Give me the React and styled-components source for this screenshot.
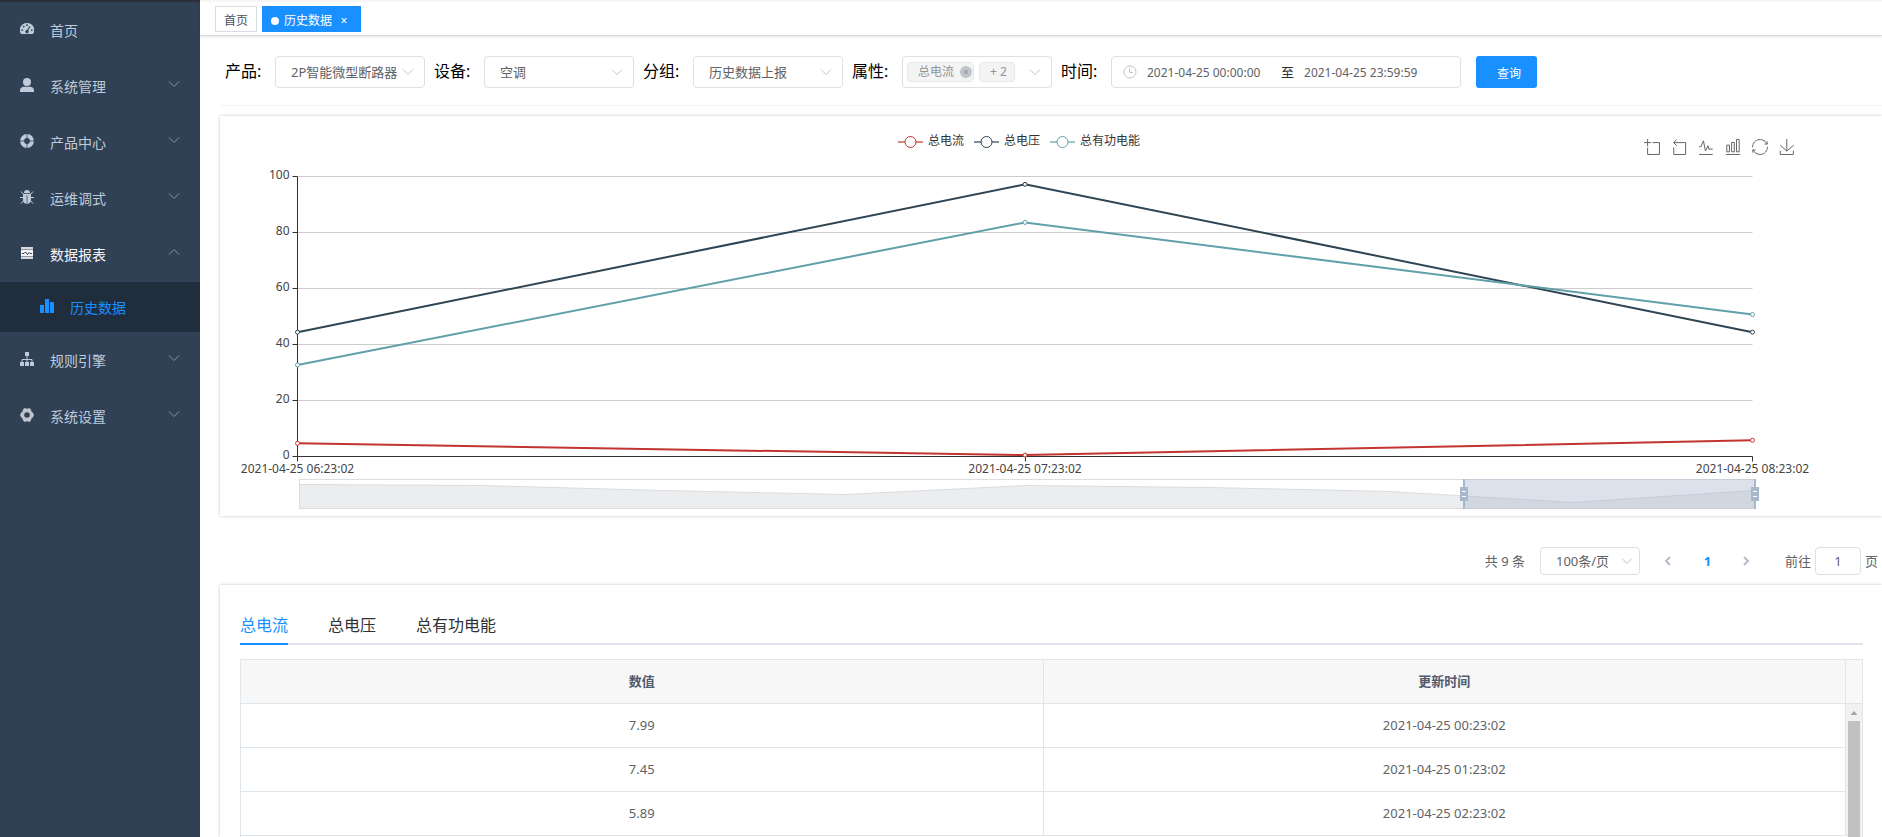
import React, { useLayoutEffect, useRef, useState } from "react";
import styled, { createGlobalStyle, css } from "styled-components";

const GlobalStyle = createGlobalStyle`
  *, *::before, *::after { box-sizing: border-box; }
  body { margin: 0; background: #fff; color: #303133; }
  body, button, input, select { font-family: "Noto Sans", "Noto Sans CJK SC", sans-serif; }
  button { border: 0; padding: 0; background: none; cursor: pointer; }
  a { color: inherit; text-decoration: none; }
`;

const Shell = styled.div`
  display: flex;
  height: 100vh;
  overflow: hidden;
`;

/* ---------- sidebar ---------- */

const Sidebar = styled.nav`
  flex: 0 0 200px;
  background: #304156;
  border-top: 2px solid #2b2f3a;
`;

const MenuRow = styled.a`
  display: flex;
  align-items: center;
  height: ${(p) => (p.$sub ? 50 : 56)}px;
  padding: 0 20px 0 ${(p) => (p.$sub ? 40 : 20)}px;
  gap: 16px;
  font-size: 14px;
  line-height: 20px;
  background: ${(p) => (p.$sub ? "#1f2d3d" : "transparent")};
  color: ${(p) => (p.$sub ? "#1890ff" : p.$open ? "#f4f4f5" : "#bfcbd9")};
`;

const MenuIcon = styled.svg`
  flex: none;
  width: 14px;
  height: 14px;
  margin-bottom: 2px;
`;

const MenuText = styled.span`
  flex: 1;
  padding-top: 2px;
`;

const ChevronSvg = styled.svg`
  flex: none;
  width: 12px;
  height: 12px;
  fill: none;
  stroke: ${(p) => p.$color || "#c0c4cc"};
  pointer-events: none;
  transform: ${(p) => (p.$up ? "rotate(180deg)" : "none")};
`;

const MenuChevron = styled(ChevronSvg)`
  margin-bottom: 4px;
`;

const icons = {
  gauge: (
    <path
      fill="currentColor"
      fillRule="evenodd"
      d="M7 1a7 7 0 0 0-6 10.900h12A7 7 0 0 0 7 1zM7 2.300a.9.9 0 1 1 0 1.800.9.9 0 0 1 0-1.800zM3.700 3.700a.9.9 0 1 1 0 1.800.9.9 0 0 1 0-1.800zM2.200 7.200a.9.9 0 1 1 0 1.800.9.9 0 0 1 0-1.800zM11.800 7.200a.9.9 0 1 1 0 1.800.9.9 0 0 1 0-1.800zM9.600 3.900l.9.500-2.300 4.200a1.600 1.600 0 1 1-1.100-.5z"
    />
  ),
  user: (
    <g fill="currentColor">
      <circle cx="7" cy="4" r="4" />
      <path d="M0 14v-1.500C0 9.800 2.500 8.800 4 8.800h6c1.500 0 4 1 4 3.700V14z" />
    </g>
  ),
  buoy: (
    <g fill="none">
      <circle cx="7" cy="7" r="4.900" stroke="currentColor" strokeWidth="4" />
      <path d="M7 0v4.500M7 9.500V14M0 7h4.500M9.500 7H14" stroke="#304156" opacity="0.8" />
    </g>
  ),
  bug: (
    <g>
      <path fill="currentColor" d="M4 3a3 3 0 0 1 6 0zM3 3.800h8V10c0 2-1.500 3.800-4 3.800S3 12 3 10z" />
      <path
        fill="none"
        stroke="currentColor"
        d="M1 1.500l2.500 3M13 1.500l-2.500 3M0 7.500h4M14 7.500h-4M1 13.500l3-3.500M13 13.500L10 10"
      />
      <path stroke="#304156" opacity="0.7" d="M7 5.500V13" />
    </g>
  ),
  report: (
    <g>
      <path fill="currentColor" d="M1 1h12v2H1zM1 11h12v2H1z" opacity="0.85" />
      <path fill="currentColor" d="M1 3.500h12v7H1z" />
      <path fill="none" stroke="#304156" d="M2 7.500h2l1.500-1.500 2 2.500L9 6.500l1 1h2" />
    </g>
  ),
  bars: <path fill="currentColor" d="M0 6h4v8H0zM5 0h4v14H5zM10 3h4v11h-4z" />,
  tree: (
    <g>
      <path fill="currentColor" d="M5 0h4v4H5zM0 10h4v4H0zM5 10h4v4H5zM10 10h4v4h-4z" />
      <path fill="none" stroke="currentColor" d="M7 4v6M2 10V7.500h10V10" />
    </g>
  ),
  gear: (
    <path
      fill="#c0c4cc"
      fillRule="evenodd"
      d="M4 0.300h1.800L7 1l1.200-.7H10l1.300 2.200.2 1.200 1.300.8L14 7l-1.200 2.500-1.300.8-.2 1.200L10 13.700H8.200L7 13l-1.200.7H4l-1.300-2.200-.2-1.200-1.300-.8L0 7l1.200-2.500 1.300-.8.2-1.200zM7 4.200a2.800 2.800 0 1 0 0 5.600 2.800 2.800 0 0 0 0-5.600z"
    />
  ),
};

const menu = [
  { label: "首页", icon: "gauge" },
  { label: "系统管理", icon: "user", arrow: true },
  { label: "产品中心", icon: "buoy", arrow: true },
  { label: "运维调式", icon: "bug", arrow: true },
  { label: "数据报表", icon: "report", arrow: true, open: true },
  { label: "历史数据", icon: "bars", sub: true },
  { label: "规则引擎", icon: "tree", arrow: true },
  { label: "系统设置", icon: "gear", arrow: true },
];

const Chevron = ({ as: Svg = ChevronSvg, ...rest }) => (
  <Svg viewBox="0 0 12 12" aria-hidden="true" {...rest}>
    <path d="M1 3.500l5 5 5-5" />
  </Svg>
);

/* ---------- page header tags ---------- */

const Main = styled.main`
  flex: 1;
  min-width: 0;
  display: flex;
  flex-direction: column;
`;

const TagBar = styled.div`
  flex: none;
  display: flex;
  gap: 5px;
  height: 36px;
  padding: 4px 15px 0;
  border-top: 2px solid #f5f7f7;
  border-bottom: 1px solid #d8dce5;
  box-shadow: 0 1px 3px rgba(0, 0, 0, 0.12);
`;

const PageTag = styled.div`
  display: flex;
  align-items: center;
  height: 26px;
  padding: 3px 8px 0;
  border: 1px solid ${(p) => (p.$active ? "#1890ff" : "#d8dce5")};
  background: ${(p) => (p.$active ? "#1890ff" : "#fff")};
  color: ${(p) => (p.$active ? "#fff" : "#495060")};
  font-size: 12px;
  line-height: 20px;
  &::before {
    content: "";
    display: ${(p) => (p.$active ? "block" : "none")};
    width: 8px;
    height: 8px;
    margin-right: 5px;
    border-radius: 50%;
    background: #fff;
  }
`;

const TagClose = styled.button`
  width: 16px;
  margin-left: 4px;
  color: #fff;
  font-size: 12px;
  line-height: 16px;
`;

/* ---------- filters ---------- */

const Filters = styled.form`
  flex: none;
  display: flex;
  align-items: center;
  gap: 9px;
  margin-left: 20px;
  padding: 20px 0 17px 5px;
  border-bottom: 1px solid #f3f3f5;
`;

const Field = styled.div`
  display: flex;
  align-items: center;
`;

const FieldLabel = styled.label`
  width: 50px;
  padding-bottom: 2px;
  color: #000;
  font-size: 16px;
  line-height: 24px;
`;

const boxed = css`
  border: 1px solid #dcdfe6;
  border-radius: 4px;
  background: #fff;
  color: #606266;
`;

const SelectWrap = styled.span`
  display: grid;
  align-items: center;
  width: ${(p) => p.$width}px;
  & > * { grid-area: 1 / 1; }
  & > svg { justify-self: end; margin-right: ${(p) => p.$inset}px; }
`;

const Select = styled.select`
  ${boxed}
  appearance: none;
  width: 100%;
  height: ${(p) => p.$height}px;
  padding: 0 24px 0 15px;
  font-size: 13px;
  overflow: hidden;
`;

const TagBox = styled.div`
  ${boxed}
  display: flex;
  align-items: center;
  gap: 5px;
  width: 150px;
  height: 32px;
  padding: 0 10px 0 4px;
`;

const ChoiceTag = styled.span`
  display: flex;
  align-items: center;
  gap: 6px;
  height: 20px;
  padding: 0 ${(p) => (p.$closable ? 1 : 7)}px 0 10px;
  border: 1px solid #e9e9eb;
  border-radius: 4px;
  background: #f4f4f5;
  color: #909399;
  font-size: 12px;
  line-height: 18px;
  white-space: nowrap;
`;

const ChoiceRemove = styled.button`
  display: flex;
  width: 12px;
  height: 12px;
  border-radius: 50%;
  background: #c0c4cc;
`;

const OpenButton = styled.button`
  display: flex;
  margin-left: auto;
`;

const RangeBox = styled.div`
  ${boxed}
  display: flex;
  align-items: center;
  gap: 10px;
  width: 350px;
  height: 32px;
  padding-left: 11px;
  color: #303133;
  font-size: 13px;
  line-height: 20px;
`;

const RangeInput = styled.input`
  width: 124px;
  height: 28px;
  padding: 0;
  border: 0;
  outline: 0;
  background: none;
  color: #606266;
  font-size: 12px;
`;

const QueryButton = styled.button`
  height: 32px;
  margin-left: 6px;
  padding: 1px 16px 0 21px;
  border-radius: 3px;
  background: #1890ff;
  color: #fff;
  font-size: 12px;
`;

const SelectField = ({ id, label, value }) => (
  <Field>
    <FieldLabel htmlFor={id}>{label}</FieldLabel>
    <SelectWrap $width={150} $inset={11}>
      <Select id={id} $height={32} defaultValue={value}>
        <option>{value}</option>
      </Select>
      <Chevron />
    </SelectWrap>
  </Field>
);

/* ---------- chart ---------- */

const Card = styled.section`
  flex: ${(p) => (p.$fill ? "1 0 auto" : "none")};
  margin-left: 20px;
  background: #fff;
  box-shadow: 0 0 3px rgba(0, 0, 0, 0.24);
`;

const ChartCard = styled(Card)`
  margin-top: 10px;
  padding: 0 84px 0 20px;
`;

const ChartHead = styled.div`
  display: grid;
  grid-template-columns: 1fr auto 1fr;
  align-items: center;
  height: 50px;
`;

const Legend = styled.div`
  grid-column: 2;
  display: flex;
  gap: 10px;
`;

const LegendItem = styled.button`
  display: flex;
  align-items: center;
  gap: 5px;
  color: #333;
  font-size: 12px;
  line-height: 16px;
`;

const Toolbox = styled.div`
  justify-self: end;
  display: flex;
  gap: 11px;
  padding: 11px 3px 0 0;
`;

const ToolButton = styled.button`
  display: flex;
  svg {
    width: 16px;
    height: 16px;
    overflow: visible;
    fill: none;
    stroke: #666;
  }
`;

const Plot = styled.svg`
  display: block;
  width: 100%;
  height: 350px;
  overflow: visible;
  font-size: 12px;
  fill: #444;
`;

const tools = [
  ["区域缩放", "M0,13.5h26.9 M13.5,26.9V0 M32.1,13.5H58V58H13.5 V32.1"],
  ["区域缩放还原", "M22,1.4L9.9,13.5l12.3,12.3 M10.3,13.5H54.9v44.6 H10.3v-26"],
  ["切换为折线图", "M4.1,28.9h7.1l9.3-22l7.4,38l9.7-19.7l3,12.8h14.9M4.1,58h51.4"],
  ["切换为柱状图", "M6.7,22.9h10V48h-10V22.9zM24.9,13h10v35h-10V13zM43.2,2h10v46h-10V2zM3.1,58h53.7"],
  [
    "还原",
    "M47,18.9h9.8V8.7 M56.3,20.1 C52.1,9,40.5,0.6,26.8,2.1C12.6,3.7,1.6,16.2,2.1,30.6 M13,41.1H3.1v10.2 M3.7,39.9c4.2,11.1,15.8,19.5,29.5,18 c14.2-1.6,25.2-14.1,24.7-28.5",
  ],
  ["保存为图片", "M4.7,22.9L29.3,45.5L54.7,23.4M4.6,43.6L4.6,58L53.8,58L53.8,43.6M29.2,45.1L29.2,0"],
];

const series = [
  { name: "总电流", color: "#c23531", data: [4.7, 0.5, 5.8] },
  { name: "总电压", color: "#2f4554", data: [44.4, 97.2, 44.4] },
  { name: "总有功电能", color: "#61a0a8", data: [32.7, 83.6, 50.7] },
];

const times = ["2021-04-25 06:23:02", "2021-04-25 07:23:02", "2021-04-25 08:23:02"];

/* heights of the overview line above the slider's bottom edge */
const overview = [24, 23, 18, 14, 23, 21, 17, 6, 18];

function HistoryPlot() {
  const ref = useRef(null);
  const [width, setWidth] = useState(1558);

  useLayoutEffect(() => {
    const measure = () => setWidth(Math.round(ref.current.getBoundingClientRect().width));
    measure();
    const observer = new ResizeObserver(measure);
    observer.observe(ref.current);
    return () => observer.disconnect();
  }, []);

  const left = 57.5;
  const right = width - 45.5;
  const bottom = 290.5;
  const x = (i) => left + ((right - left) * i) / 2;
  const y = (v) => bottom - v * 2.8;

  const sLeft = left + 2;
  const sRight = right + 2;
  const sTop = 313.5;
  const sBottom = 342.5;
  const step = (sRight - sLeft) / (overview.length - 1);
  const line = overview.map((h, i) => `${sLeft + step * i},${sBottom - h}`).join(" ");
  const selected = Math.round(sLeft + step * 6.4);

  return (
    <Plot ref={ref} role="img" aria-label="历史数据">
      {[0, 20, 40, 60, 80, 100].map((v) => (
        <g key={v}>
          {v > 0 && <path d={`M${left} ${y(v)}H${right}`} stroke="#ccc" />}
          <path d={`M${left - 5} ${y(v)}H${left}`} stroke="#333" />
          <text x={left - 8} y={y(v) + 2} textAnchor="end">
            {v}
          </text>
        </g>
      ))}
      <path d={`M${left} ${y(100)}V${bottom}H${right}`} fill="none" stroke="#333" />
      {times.map((t, i) => (
        <g key={t}>
          <path d={`M${Math.floor(x(i)) + 0.5} ${bottom}v5`} stroke="#333" />
          <text x={x(i)} y={bottom + 16} textAnchor="middle">
            {t}
          </text>
        </g>
      ))}
      {series.map((s) => (
        <g key={s.name} stroke={s.color}>
          <polyline
            points={s.data.map((v, i) => `${x(i)},${y(v)}`).join(" ")}
            fill="none"
            strokeWidth="2"
          />
          {s.data.map((v, i) => (
            <circle key={i} cx={x(i)} cy={y(v)} r="2" fill="#fff" />
          ))}
        </g>
      ))}
      <polygon points={`${sLeft},${sBottom} ${line} ${sRight},${sBottom}`} fill="#ecedee" />
      <polyline points={line} fill="none" stroke="#d9dce0" />
      <rect x={sLeft} y={sTop} width={sRight - sLeft} height="29" fill="none" stroke="#ddd" />
      <rect x={selected} y="313" width={sRight - selected} height="30" fill="#a7b7cc" fillOpacity="0.4" />
      {[selected, sRight].map((h) => (
        <g key={h} transform={`translate(${Math.round(h)} 313)`}>
          <path d="M-1 0h2v30h-2zM-4 8h8v14h-8z" fill="#a7b7cc" />
          <path d="M-2 12.500h4M-2 17.500h4" stroke="#fff" />
        </g>
      ))}
    </Plot>
  );
}

/* ---------- pagination ---------- */

const Pager = styled.div`
  flex: none;
  display: flex;
  align-items: center;
  justify-content: flex-end;
  padding: 31px 4px 10px 0;
  color: #606266;
  font-size: 13px;
  line-height: 28px;
`;

const PageButton = styled.button`
  display: flex;
  align-items: center;
  justify-content: center;
  width: 39px;
  height: 28px;
  color: ${(p) => (p.$current ? "#1890ff" : "#c0c4cc")};
  font-size: 13px;
  font-weight: 700;
  svg {
    width: 12px;
    height: 12px;
    fill: none;
    stroke: #b4bccc;
    stroke-width: 2;
  }
`;

const Total = styled.span`
  margin-right: 15px;
`;

const PageButtons = styled.div`
  display: flex;
  margin: 0 19px 0 9px;
`;

const JumpInput = styled.input`
  ${boxed}
  width: 46px;
  height: 28px;
  margin: 0 4px;
  text-align: center;
  font-size: 13px;
`;

/* ---------- table ---------- */

const TableCard = styled(Card)`
  display: flex;
  flex-direction: column;
  padding: 24px 19px 0 20px;
`;

const Tabs = styled.div`
  display: flex;
  gap: 40px;
  border-bottom: 2px solid #dfe4ed;
`;

const Tab = styled.button`
  height: 36px;
  margin-bottom: -2px;
  padding-bottom: 2px;
  border-bottom: 2px solid ${(p) => (p.$active ? "#1890ff" : "transparent")};
  color: ${(p) => (p.$active ? "#1890ff" : "#303133")};
  font-size: 16px;
  line-height: 30px;
`;

const TableFrame = styled.div`
  flex: 1;
  display: flex;
  margin-top: 14px;
  border: 1px solid #dfe6ec;
  border-bottom: 0;
`;

const TableScroller = styled.div`
  flex: 1;
  min-width: 0;
`;

const Table = styled.table`
  width: 100%;
  table-layout: fixed;
  border-collapse: separate;
  border-spacing: 0;
  color: #606266;
  font-size: 13px;
  th, td {
    height: 44px;
    padding: 0;
    border-right: 1px solid #dfe6ec;
    border-bottom: 1px solid #dfe6ec;
    text-align: center;
    line-height: 23px;
  }
  th {
    background: #f7f7f7;
    color: #515a6e;
    font-weight: 700;
  }
`;

const Gutter = styled.div`
  flex: 0 0 16px;
  display: flex;
  flex-direction: column;
  align-items: center;
  background: #f1f1f1;
`;

const GutterHead = styled.div`
  width: 100%;
  height: 44px;
  border-bottom: 1px solid #dfe6ec;
  background: #f8f8f9;
`;

const ScrollArrow = styled.svg`
  width: 16px;
  height: 17px;
  fill: #a3a3a3;
`;

const ScrollThumb = styled.div`
  flex: 1;
  width: 12px;
  background: #c1c1c1;
`;

const rows = [
  ["7.99", "2021-04-25 00:23:02"],
  ["7.45", "2021-04-25 01:23:02"],
  ["5.89", "2021-04-25 02:23:02"],
];

export default function App() {
  return (
    <Shell>
      <GlobalStyle />
      <Sidebar>
        {menu.map((m) => (
          <MenuRow key={m.label} href="#" $sub={m.sub} $open={m.open}>
            <MenuIcon viewBox="0 0 14 14" aria-hidden="true">
              {icons[m.icon]}
            </MenuIcon>
            <MenuText>{m.label}</MenuText>
            {m.arrow && <Chevron as={MenuChevron} $up={m.open} $color="#8492a6" />}
          </MenuRow>
        ))}
      </Sidebar>

      <Main>
        <TagBar>
          <PageTag>
            <a href="#">首页</a>
          </PageTag>
          <PageTag $active>
            <a href="#">历史数据</a>
            <TagClose type="button" aria-label="关闭">
              ×
            </TagClose>
          </PageTag>
        </TagBar>

        <Filters onSubmit={(e) => e.preventDefault()}>
          <SelectField id="product" label="产品:" value="2P智能微型断路器" />
          <SelectField id="device" label="设备:" value="空调" />
          <SelectField id="group" label="分组:" value="历史数据上报" />
          <Field>
            <FieldLabel htmlFor="property">属性:</FieldLabel>
            <TagBox>
              <ChoiceTag $closable>
                总电流
                <ChoiceRemove type="button" aria-label="移除">
                  <svg viewBox="0 0 12 12" stroke="#909399" aria-hidden="true">
                    <path d="M4 4l4 4M8 4l-4 4" />
                  </svg>
                </ChoiceRemove>
              </ChoiceTag>
              <ChoiceTag>+ 2</ChoiceTag>
              <OpenButton id="property" type="button" aria-haspopup="listbox">
                <Chevron />
              </OpenButton>
            </TagBox>
          </Field>
          <Field>
            <FieldLabel htmlFor="from">时间:</FieldLabel>
            <RangeBox>
              <svg width="14" height="14" viewBox="0 0 14 14" fill="none" stroke="#c0c4cc" aria-hidden="true">
                <circle cx="7" cy="7" r="6" />
                <path d="M6.500 3v4.500H10" />
              </svg>
              <RangeInput id="from" aria-label="开始时间" defaultValue="2021-04-25 00:00:00" />
              <span>至</span>
              <RangeInput aria-label="结束时间" defaultValue="2021-04-25 23:59:59" />
            </RangeBox>
          </Field>
          <QueryButton type="submit">查询</QueryButton>
        </Filters>

        <ChartCard>
          <ChartHead>
            <Legend>
              {series.map((s) => (
                <LegendItem key={s.name} type="button">
                  <svg width="25" height="14" fill="none" stroke={s.color} aria-hidden="true">
                    <path d="M0 8h7M18 8h7" strokeWidth="2" opacity="0.6" />
                    <circle cx="12.500" cy="8" r="5.500" />
                  </svg>
                  {s.name}
                </LegendItem>
              ))}
            </Legend>
            <Toolbox>
              {tools.map(([name, d]) => (
                <ToolButton key={name} type="button" aria-label={name}>
                  <svg viewBox="0 0 60 60" aria-hidden="true">
                    <path d={d} vectorEffect="non-scaling-stroke" />
                  </svg>
                </ToolButton>
              ))}
            </Toolbox>
          </ChartHead>
          <HistoryPlot />
        </ChartCard>

        <Pager>
          <Total>共 9 条</Total>
          <SelectWrap $width={100} $inset={7}>
            <Select aria-label="每页条数" $height={28} defaultValue="100条/页">
              <option>100条/页</option>
            </Select>
            <Chevron />
          </SelectWrap>
          <PageButtons>
            <PageButton type="button" aria-label="上一页">
              <svg viewBox="0 0 12 12">
                <path d="M8 2L4 6l4 4" />
              </svg>
            </PageButton>
            <PageButton type="button" $current>
              1
            </PageButton>
            <PageButton type="button" aria-label="下一页">
              <svg viewBox="0 0 12 12">
                <path d="M4 2l4 4-4 4" />
              </svg>
            </PageButton>
          </PageButtons>
          <label htmlFor="jump">前往</label>
          <JumpInput id="jump" defaultValue="1" />
          <span>页</span>
        </Pager>

        <TableCard $fill>
          <Tabs role="tablist">
            {series.map((s, i) => (
              <Tab key={s.name} type="button" role="tab" aria-selected={i === 0} $active={i === 0}>
                {s.name}
              </Tab>
            ))}
          </Tabs>
          <TableFrame>
            <TableScroller>
              <Table>
                <thead>
                  <tr>
                    <th scope="col">数值</th>
                    <th scope="col">更新时间</th>
                  </tr>
                </thead>
                <tbody>
                  {rows.map(([value, time]) => (
                    <tr key={time}>
                      <td>{value}</td>
                      <td>{time}</td>
                    </tr>
                  ))}
                </tbody>
              </Table>
            </TableScroller>
            <Gutter>
              <GutterHead />
              <ScrollArrow viewBox="0 0 16 17" aria-hidden="true">
                <path d="M4.500 11h7L8 7z" />
              </ScrollArrow>
              <ScrollThumb />
            </Gutter>
          </TableFrame>
        </TableCard>
      </Main>
    </Shell>
  );
}
